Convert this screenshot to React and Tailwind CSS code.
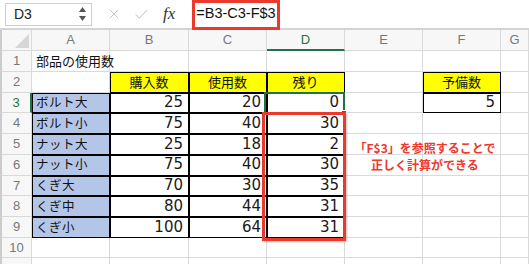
import { X, Check } from "lucide-react";

const cols = ["A", "B", "C", "D", "E", "F", "G"];

const rows = [
  { n: 1, cells: { A: { t: "部品の使用数", kind: "text" } } },
  {
    n: 2,
    cells: {
      B: { t: "購入数", kind: "head" },
      C: { t: "使用数", kind: "head" },
      D: { t: "残り", kind: "head" },
      F: { t: "予備数", kind: "head" },
    },
  },
  { n: 3, cells: { A: { t: "ボルト大", kind: "label" }, B: { t: "25", kind: "num" }, C: { t: "20", kind: "num" }, D: { t: "0", kind: "num" }, F: { t: "5", kind: "num" } } },
  { n: 4, cells: { A: { t: "ボルト小", kind: "label" }, B: { t: "75", kind: "num" }, C: { t: "40", kind: "num" }, D: { t: "30", kind: "num" } } },
  { n: 5, cells: { A: { t: "ナット大", kind: "label" }, B: { t: "25", kind: "num" }, C: { t: "18", kind: "num" }, D: { t: "2", kind: "num" } } },
  { n: 6, cells: { A: { t: "ナット小", kind: "label" }, B: { t: "75", kind: "num" }, C: { t: "40", kind: "num" }, D: { t: "30", kind: "num" } } },
  { n: 7, cells: { A: { t: "くぎ大", kind: "label" }, B: { t: "70", kind: "num" }, C: { t: "30", kind: "num" }, D: { t: "35", kind: "num" } } },
  { n: 8, cells: { A: { t: "くぎ中", kind: "label" }, B: { t: "80", kind: "num" }, C: { t: "44", kind: "num" }, D: { t: "31", kind: "num" } } },
  { n: 9, cells: { A: { t: "くぎ小", kind: "label" }, B: { t: "100", kind: "num" }, C: { t: "64", kind: "num" }, D: { t: "31", kind: "num" } } },
  { n: 10, cells: {} },
  { n: 11, cells: {}, hideLabel: true },
];

const jp = "font-['Noto_Sans_CJK_JP',sans-serif]";
const boxed = "border-r-black border-b-black shadow-[inset_1px_1px_0_#000]";

function Cell({ cell, h }) {
  let cls = `border-r border-b border-[#d9d9d9] flex items-center overflow-visible whitespace-nowrap ${h}`;
  if (cell?.kind === "head") cls += ` bg-[#ffff00] justify-center text-[13px] text-[#111] ${jp} ${boxed}`;
  else if (cell?.kind === "label") cls += ` bg-[#b4c6e7] pl-[4px] text-[12.5px] tracking-[0.5px] text-[#111] ${jp} ${boxed}`;
  else if (cell?.kind === "num") cls += ` bg-white justify-end pr-[5px] text-[15px] text-[#1a1a1a] font-['DejaVu_Sans',sans-serif] ${boxed}`;
  else if (cell?.kind === "text") cls += ` pl-[4px] text-[13px] text-[#111] ${jp}`;
  return <div className={cls}>{cell?.t}</div>;
}

export default function App() {
  return (
    <div className="relative w-[529px] h-[264px] overflow-hidden bg-white font-['Liberation_Sans',sans-serif]">
      {/* Formula bar */}
      <div className="flex items-center h-[30px] border-b-2 border-[#d4d4d4] bg-white">
        <div className="ml-[5px] flex items-center justify-between w-[87px] h-[23px] border border-[#cfcfcf] bg-white pl-[8px] pr-[4px]">
          <span className="text-[14px] text-[#222]">D3</span>
          <svg width="9" height="16" viewBox="0 0 9 16">
            <path d="M4.5 1 L8 6 L1 6 Z" fill="#555" />
            <path d="M1 10 L8 10 L4.5 15 Z" fill="#555" />
          </svg>
        </div>
        <X className="ml-[14px] w-[16px] h-[16px] text-[#b8b8b8]" strokeWidth={1.3} />
        <Check className="ml-[11px] w-[17px] h-[17px] text-[#b8b8b8]" strokeWidth={1.3} />
        <span className="ml-[13px] text-[17px] italic text-[#333] font-['Liberation_Serif',serif]">fx</span>
        <span className="ml-[21px] text-[14.5px] text-[#111]">=B3-C3-F$3</span>
      </div>

      {/* Sheet */}
      <div className="grid grid-cols-[30px_78px_79px_78px_78px_78px_78px_1fr] border-l-2 border-[#cccccc]">
        <div className="relative h-[21px] border-r border-b border-[#d9d9d9] bg-[#f7f7f7]">
          <svg className="absolute right-[2px] bottom-[2px]" width="14" height="14" viewBox="0 0 14 14">
            <path d="M14 0 L14 14 L0 14 Z" fill="#d6d6d6" />
          </svg>
        </div>
        {cols.map((c) => (
          <div
            key={c}
            className={`h-[21px] flex items-center justify-center text-[13px] bg-[#f7f7f7] border-r border-[#d9d9d9] ${
              c === "D" ? "text-[#217346] border-b-2 border-b-[#217346]" : "text-[#777] border-b"
            }`}
          >
            {c}
          </div>
        ))}
        {rows.map((r) => {
          const h = r.n === 10 ? "h-[20px]" : "h-[20.78px]";
          return [
            <div
              key={`h${r.n}`}
              className={`${h} flex items-center justify-center text-[13px] bg-[#f7f7f7] border-b border-[#d9d9d9] ${
                r.n === 3 ? "text-[#217346] border-r-2 border-r-[#217346]" : "text-[#777] border-r"
              }`}
            >
              {r.hideLabel ? "" : r.n}
            </div>,
            ...cols.map((c) => <Cell key={`${c}${r.n}`} cell={r.cells[c]} h={h} />),
          ];
        })}
      </div>

      {/* Active cell D3 */}
      <div className="absolute left-[264px] top-[92px] w-[81px] h-[22px] border-2 border-[#217346]" />
      <div className="absolute left-[341px] top-[110px] w-[6px] h-[6px] bg-[#217346] border border-white" />

      {/* Highlight: formula */}
      <div className="absolute left-[192px] top-0 w-[88px] h-[30px] border-[3px] border-[#ea3a2d]" />

      {/* Highlight: D4:D9 */}
      <div className="absolute left-[262px] top-[112px] w-[84px] h-[129px] border-[3px] border-[#ea3a2d] shadow-[1px_1px_2px_rgba(0,0,0,0.25)]" />

      {/* Annotation */}
      <div className={`absolute left-[347px] top-[139px] w-[156px] text-center text-[12px] leading-[17px] font-bold text-[#f0382c] ${jp}`}>
        <div>「F$3」を参照することで</div>
        <div>正しく計算ができる</div>
      </div>
    </div>
  );
}
